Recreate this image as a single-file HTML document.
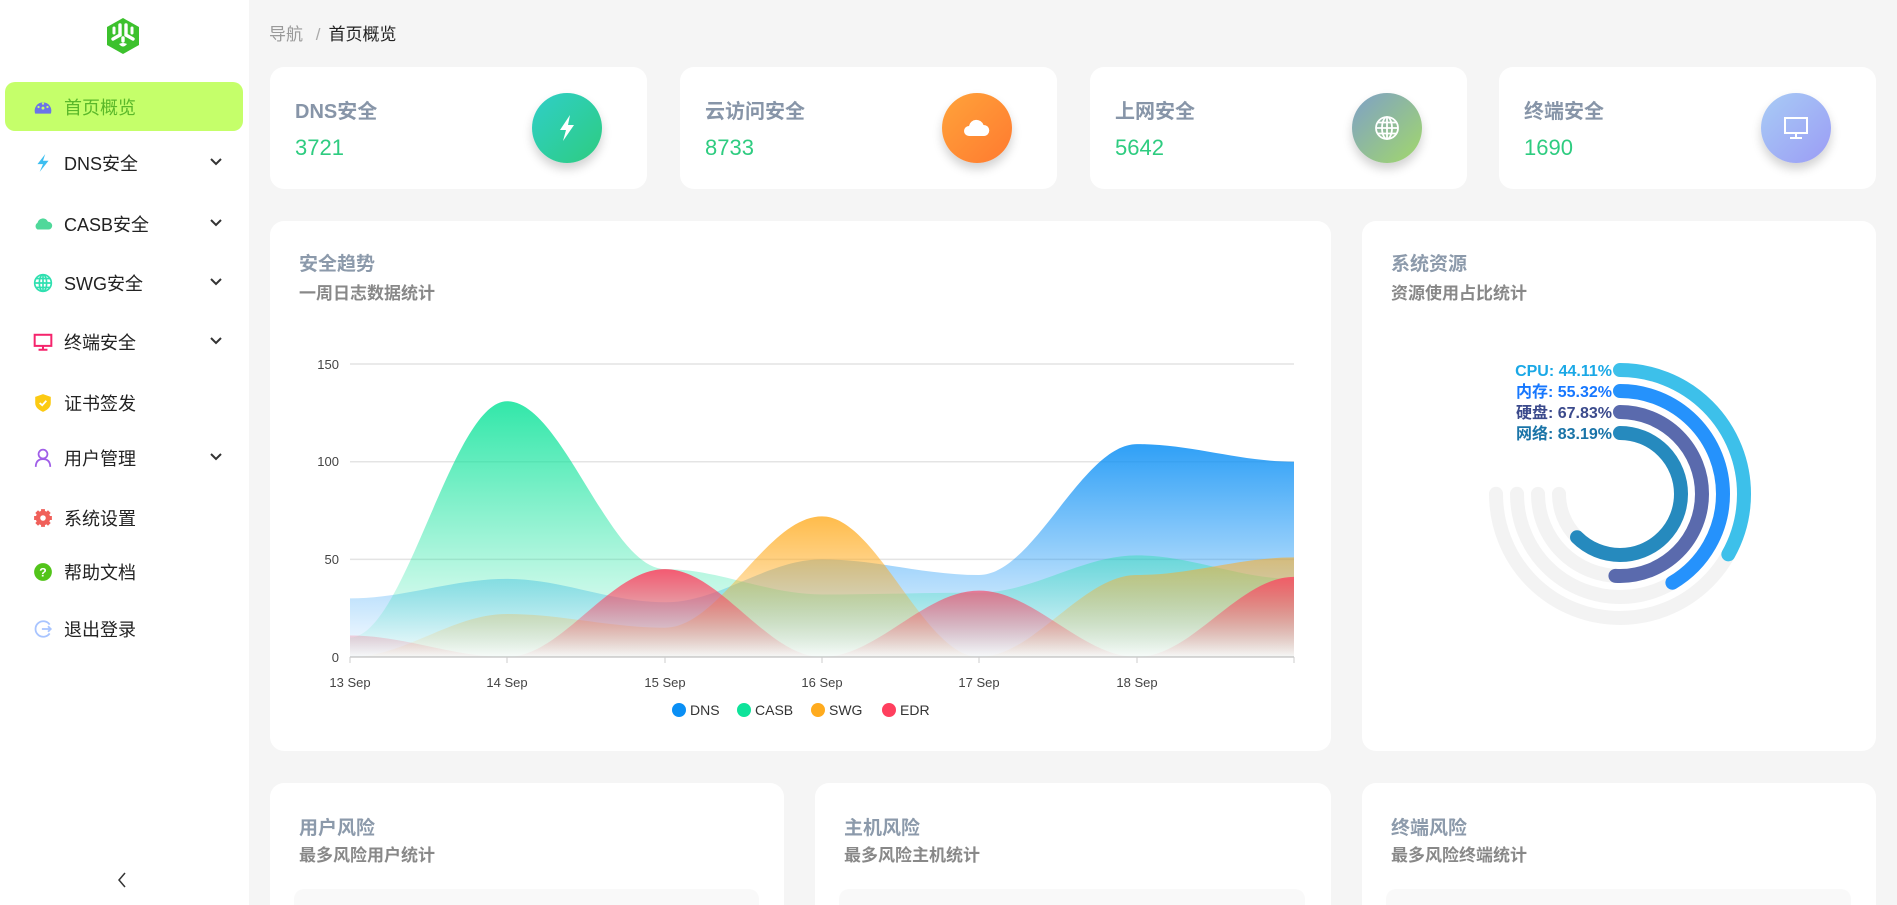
<!DOCTYPE html>
<html><head><meta charset="utf-8">
<style>
*{box-sizing:border-box;margin:0;padding:0}
html{width:1897px;height:905px;overflow:hidden}
body{width:1897px;height:905px;overflow:hidden;background:#f5f5f5;font-family:"Liberation Sans","Noto Sans CJK SC",sans-serif;position:relative}
.side{position:absolute;left:0;top:0;width:249px;height:905px;background:#fff}
.item{position:absolute;left:5px;width:238px;height:49px;display:flex;align-items:center;font-size:18px;color:#222}
.item .ic{position:absolute;left:28px;top:50%;transform:translateY(-50%);width:20px;height:20px}
.item .tx{position:absolute;left:59px}
.item .chev{position:absolute;left:204px;top:50%;transform:translateY(-60%);width:14px;height:10px}
.active{background:#c5ff6a;border-radius:10px;color:#5ab82a}
.card{position:absolute;background:#fff;border-radius:14px;overflow:hidden}
.st .t{position:absolute;left:25px;top:28px;font-size:20px;font-weight:bold;color:#8795a8}
.st .n{position:absolute;left:25px;top:68px;font-size:22px;color:#2ecc80}
.st .c{position:absolute;left:262px;top:26px;width:70px;height:70px;border-radius:50%;box-shadow:0 6px 10px rgba(0,0,0,.18);display:flex;align-items:center;justify-content:center}
.st{overflow:visible}
.ct{position:absolute;left:29px;font-weight:bold}
.ct1{top:28px;font-size:19px;color:#8c9aab}
.ct2{top:58px;font-size:17px;color:#888}
</style></head><body>
<div class="side">
  <svg style="position:absolute;left:105px;top:17px" width="36" height="38" viewBox="0 0 36 38">
    <path d="M18 1 L34 10 L34 28 L18 37 L2 28 L2 10 Z" fill="#3cc12d"/>
    <path d="M15 8 L15 18 L8 22 M21 8 L21 18 L28 22 M18 21 L18 24" stroke="#fff" stroke-width="3.4" fill="none" stroke-linecap="round"/>
    <path d="M9 11 L9 16 M27 11 L27 16" stroke="#fff" stroke-width="3" stroke-linecap="round"/>
    <path d="M14 27 Q18 32 22 27 Q18 25 14 27Z" fill="#fff"/>
  </svg>
  <div class="item active" style="top:82px"><svg class="ic" viewBox="0 0 18 18"><path d="M2 13 A7.5 7.5 0 1 1 16 13 L2 13Z" fill="#6b74e8" transform="translate(0,2)"/><circle cx="9" cy="10" r="1.3" fill="#c5ff6a"/><circle cx="5" cy="9" r="1" fill="#c5ff6a"/><circle cx="13" cy="9" r="1" fill="#c5ff6a"/><circle cx="9" cy="6" r="1" fill="#c5ff6a"/></svg><span class="tx">首页概览</span></div>
  <div class="item" style="top:138px"><svg class="ic" viewBox="0 0 18 18"><path d="M11 1 L4 10 L9 10 L6 17 L14 7 L9 7 Z" fill="#3cbef0"/></svg><span class="tx">DNS安全</span><svg class="chev" viewBox="0 0 14 10"><path d="M2 2 L7 7 L12 2" stroke="#333" stroke-width="2" fill="none"/></svg></div>
  <div class="item" style="top:199px"><svg class="ic" viewBox="0 0 18 18"><path d="M4 14 A3.5 3.5 0 0 1 4 8 A5 5 0 0 1 13.5 7 A3.5 3.5 0 0 1 14 14 Z" fill="#4fd89a"/></svg><span class="tx">CASB安全</span><svg class="chev" viewBox="0 0 14 10"><path d="M2 2 L7 7 L12 2" stroke="#333" stroke-width="2" fill="none"/></svg></div>
  <div class="item" style="top:258px"><svg class="ic" viewBox="0 0 18 18"><g stroke="#2fe0b0" stroke-width="1.5" fill="none"><circle cx="9" cy="9" r="7.5"/><ellipse cx="9" cy="9" rx="3.3" ry="7.5"/><path d="M1.5 9 H16.5 M3 5 H15 M3 13 H15 M9 1.5 V16.5"/></g></svg><span class="tx">SWG安全</span><svg class="chev" viewBox="0 0 14 10"><path d="M2 2 L7 7 L12 2" stroke="#333" stroke-width="2" fill="none"/></svg></div>
  <div class="item" style="top:317px"><svg class="ic" viewBox="0 0 18 18"><g stroke="#f5246c" stroke-width="1.8" fill="none"><rect x="1.5" y="2.5" width="15" height="10"/><path d="M9 12.5 V16 M5 16 H13"/></g></svg><span class="tx">终端安全</span><svg class="chev" viewBox="0 0 14 10"><path d="M2 2 L7 7 L12 2" stroke="#333" stroke-width="2" fill="none"/></svg></div>
  <div class="item" style="top:378px"><svg class="ic" viewBox="0 0 18 18"><path d="M9 1 L16 3.5 L16 9 Q16 14 9 17 Q2 14 2 9 L2 3.5 Z" fill="#fcca12"/><path d="M6 9 L8.3 11 L12 7" stroke="#fff" stroke-width="1.6" fill="none"/></svg><span class="tx">证书签发</span></div>
  <div class="item" style="top:433px"><svg class="ic" viewBox="0 0 18 18"><g stroke="#a05ee8" stroke-width="1.6" fill="none"><circle cx="9" cy="5.5" r="4"/><path d="M2.5 17 Q2.5 10 9 10 Q15.5 10 15.5 17"/></g></svg><span class="tx">用户管理</span><svg class="chev" viewBox="0 0 14 10"><path d="M2 2 L7 7 L12 2" stroke="#333" stroke-width="2" fill="none"/></svg></div>
  <div class="item" style="top:493px"><svg class="ic" viewBox="0 0 18 18"><g fill="#f0605a"><circle cx="9" cy="9" r="6.5"/><g stroke="#f0605a" stroke-width="3.5"><path d="M9 1 V17 M1 9 H17 M3.3 3.3 L14.7 14.7 M14.7 3.3 L3.3 14.7"/></g></g><circle cx="9" cy="9" r="2.5" fill="#fff"/></svg><span class="tx">系统设置</span></div>
  <div class="item" style="top:547px"><svg class="ic" viewBox="0 0 18 18"><circle cx="9" cy="9" r="8" fill="#52c41a"/><text x="9" y="13" text-anchor="middle" font-size="11" font-weight="bold" fill="#fff" font-family="Liberation Sans">?</text></svg><span class="tx">帮助文档</span></div>
  <div class="item" style="top:604px"><svg class="ic" viewBox="0 0 18 18"><g stroke="#a8c4ff" stroke-width="1.6" fill="none"><path d="M15 5 A7 7 0 1 0 15 13"/><path d="M8 9 H16 M13.5 6.5 L16 9 L13.5 11.5"/></g></svg><span class="tx">退出登录</span></div>
  <svg style="position:absolute;left:116px;top:871px" width="12" height="18" viewBox="0 0 12 18"><path d="M9 2 L3 9 L9 16" stroke="#333" stroke-width="1.5" fill="none"/></svg>
</div>

<div style="position:absolute;left:269px;top:20px;font-size:17px;color:#999">导航 <span style="margin:0 8px;color:#aaa">/</span><span style="color:#222">首页概览</span></div>

<div class="card st" style="left:270px;top:67px;width:377px;height:122px"><div class="t">DNS安全</div><div class="n">3721</div><div class="c" style="background:linear-gradient(135deg,#2fcfc8,#2ecc80)"><svg width="24" height="28" viewBox="0 0 24 28"><path d="M15 1 L5 16 L11 16 L8 27 L19 11 L13 11 Z" fill="#fff"/></svg></div></div>
<div class="card st" style="left:680px;top:67px;width:377px;height:122px"><div class="t">云访问安全</div><div class="n">8733</div><div class="c" style="background:linear-gradient(135deg,#ffa33a,#ff7a30)"><svg width="28" height="20" viewBox="0 0 28 20"><path d="M6 18 A5 5 0 0 1 6 8 A7.5 7.5 0 0 1 20.5 7 A5.5 5.5 0 0 1 21 18 Z" fill="#fff"/></svg></div></div>
<div class="card st" style="left:1090px;top:67px;width:377px;height:122px"><div class="t">上网安全</div><div class="n">5642</div><div class="c" style="background:linear-gradient(135deg,#7ea0c8,#a2d86a)"><svg width="26" height="26" viewBox="0 0 26 26"><g stroke="#fff" stroke-width="1.8" fill="none"><circle cx="13" cy="13" r="11"/><ellipse cx="13" cy="13" rx="5" ry="11"/><path d="M2 13 H24 M4 7.5 H22 M4 18.5 H22 M13 2 V24"/></g></svg></div></div>
<div class="card st" style="left:1499px;top:67px;width:377px;height:122px"><div class="t">终端安全</div><div class="n">1690</div><div class="c" style="background:linear-gradient(135deg,#a8ccf5,#9b9cf5)"><svg width="26" height="26" viewBox="0 0 26 26"><g stroke="#fff" stroke-width="2" fill="none"><rect x="2" y="3" width="22" height="15"/><path d="M13 18 V23 M7 23 H19"/></g></svg></div></div>

<div class="card" style="left:270px;top:221px;width:1061px;height:530px">
  <div class="ct ct1">安全趋势</div><div class="ct ct2">一周日志数据统计</div>
</div>
<svg style="position:absolute;left:0;top:0" width="1897" height="905">
  <defs>
    <linearGradient id="gD" x1="0" y1="0" x2="0" y2="1"><stop offset="0" stop-color="#0a8ff5" stop-opacity="1"/><stop offset="1" stop-color="#0a8ff5" stop-opacity="0.02"/></linearGradient>
    <linearGradient id="gC" x1="0" y1="0" x2="0" y2="1"><stop offset="0" stop-color="#0ee39a" stop-opacity="1"/><stop offset="1" stop-color="#0ee39a" stop-opacity="0.02"/></linearGradient>
    <linearGradient id="gS" x1="0" y1="0" x2="0" y2="1"><stop offset="0" stop-color="#ffab1e" stop-opacity="1"/><stop offset="1" stop-color="#ffab1e" stop-opacity="0.02"/></linearGradient>
    <linearGradient id="gE" x1="0" y1="0" x2="0" y2="1"><stop offset="0" stop-color="#ff3f5e" stop-opacity="1"/><stop offset="1" stop-color="#ff3f5e" stop-opacity="0.02"/></linearGradient>
  </defs>
  <g stroke="#e4e4e4" stroke-width="1.5"><path d="M350 364 H1294 M350 461.7 H1294 M350 559.4 H1294"/></g>
  <path d="M350 657 H1294" stroke="#ccc" stroke-width="1.5"/>
  <g stroke="#ccc" stroke-width="1"><path d="M350 657 v6 M507 657 v6 M665 657 v6 M822 657 v6 M979 657 v6 M1137 657 v6 M1294 657 v6"/></g>
  <g font-size="13" fill="#444" text-anchor="end" font-family="Liberation Sans"><text x="339" y="369">150</text><text x="339" y="466">100</text><text x="339" y="564">50</text><text x="339" y="662">0</text></g>
  <g font-size="13" fill="#444" text-anchor="middle" font-family="Liberation Sans"><text x="350" y="687">13 Sep</text><text x="507" y="687">14 Sep</text><text x="665" y="687">15 Sep</text><text x="822" y="687">16 Sep</text><text x="979" y="687">17 Sep</text><text x="1137" y="687">18 Sep</text></g>
  <path fill="url(#gD)" opacity="0.85" d="M350 657 L350 598.4 C405 598.4 452 578.9 507 578.9 C562 578.9 610 602.3 665 602.3 C720 602.3 767 559.4 822 559.4 C877 559.4 924 575 979 575 C1034 575 1082 444.1 1137 444.1 C1192 444.1 1239 461.7 1294 461.7 L1294 657Z"/>
  <path fill="url(#gC)" opacity="0.85" d="M350 657 L350 637.5 C405 637.5 452 401.2 507 401.2 C562 401.2 610 569.1 665 569.1 C720 569.1 767 594.5 822 594.5 C877 594.5 924 592.6 979 592.6 C1034 592.6 1082 555.4 1137 555.4 C1192 555.4 1239 578.9 1294 578.9 L1294 657Z"/>
  <path fill="url(#gS)" opacity="0.8" d="M350 657 L350 657 C405 657 452 614 507 614 C562 614 610 627.7 665 627.7 C720 627.7 767 516.4 822 516.4 C877 516.4 924 657 979 657 C1034 657 1082 575 1137 575 C1192 575 1239 557.4 1294 557.4 L1294 657Z"/>
  <path fill="url(#gE)" opacity="0.85" d="M350 657 L350 635.5 C405 635.5 452 657 507 657 C562 657 610 569.1 665 569.1 C720 569.1 767 657 822 657 C877 657 924 590.6 979 590.6 C1034 590.6 1082 657 1137 657 C1192 657 1239 576.9 1294 576.9 L1294 657Z"/>
  <g font-size="14" fill="#333" font-family="Liberation Sans">
    <circle cx="679" cy="710" r="7" fill="#0a8ff5"/><text x="690" y="715">DNS</text>
    <circle cx="744" cy="710" r="7" fill="#0ee39a"/><text x="755" y="715">CASB</text>
    <circle cx="818" cy="710" r="7" fill="#ffab1e"/><text x="829" y="715">SWG</text>
    <circle cx="889" cy="710" r="7" fill="#ff3f5e"/><text x="900" y="715">EDR</text>
  </g>
</svg>

<div class="card" style="left:1362px;top:221px;width:514px;height:530px">
  <div class="ct ct1">系统资源</div><div class="ct ct2">资源使用占比统计</div>
</div>
<svg style="position:absolute;left:0;top:0" width="1897" height="905">
  <g fill="none" stroke-width="14" stroke-linecap="round" transform="rotate(-90 1620 494)">
    <circle cx="1620" cy="494" r="124" stroke="#f3f3f3" stroke-dasharray="584.3 2000"/>
    <circle cx="1620" cy="494" r="103" stroke="#f3f3f3" stroke-dasharray="485.4 2000"/>
    <circle cx="1620" cy="494" r="82" stroke="#f3f3f3" stroke-dasharray="386.4 2000"/>
    <circle cx="1620" cy="494" r="61" stroke="#f3f3f3" stroke-dasharray="287.5 2000"/>
    <circle cx="1620" cy="494" r="124" stroke="#3dc0ea" stroke-dasharray="257.7 2000"/>
    <circle cx="1620" cy="494" r="103" stroke="#2592fc" stroke-dasharray="268.5 2000"/>
    <circle cx="1620" cy="494" r="82" stroke="#5a6aad" stroke-dasharray="262.1 2000"/>
    <circle cx="1620" cy="494" r="61" stroke="#268abe" stroke-dasharray="239.2 2000"/>
  </g>
  <g font-size="16" font-weight="bold" text-anchor="end" font-family="Liberation Sans,Noto Sans CJK SC,sans-serif">
    <text x="1612" y="376" fill="#1aa8e6">CPU: 44.11%</text>
    <text x="1612" y="397" fill="#1677ff">内存: 55.32%</text>
    <text x="1612" y="418" fill="#3b4a8c">硬盘: 67.83%</text>
    <text x="1612" y="439" fill="#1a74a8">网络: 83.19%</text>
  </g>
</svg>

<div class="card" style="left:270px;top:783px;width:514px;height:122px;border-radius:14px 14px 0 0"><div class="ct ct1" style="left:29px;top:30px">用户风险</div><div class="ct ct2" style="left:29px;top:58px">最多风险用户统计</div><div style="position:absolute;left:24px;top:106px;width:465px;height:60px;background:#f9f9f9;border-radius:10px"></div></div>
<div class="card" style="left:815px;top:783px;width:516px;height:122px;border-radius:14px 14px 0 0"><div class="ct ct1" style="left:29px;top:30px">主机风险</div><div class="ct ct2" style="left:29px;top:58px">最多风险主机统计</div><div style="position:absolute;left:24px;top:106px;width:466px;height:60px;background:#f9f9f9;border-radius:10px"></div></div>
<div class="card" style="left:1362px;top:783px;width:514px;height:122px;border-radius:14px 14px 0 0"><div class="ct ct1" style="left:29px;top:30px">终端风险</div><div class="ct ct2" style="left:29px;top:58px">最多风险终端统计</div><div style="position:absolute;left:24px;top:106px;width:465px;height:60px;background:#f9f9f9;border-radius:10px"></div></div>
</body></html>
